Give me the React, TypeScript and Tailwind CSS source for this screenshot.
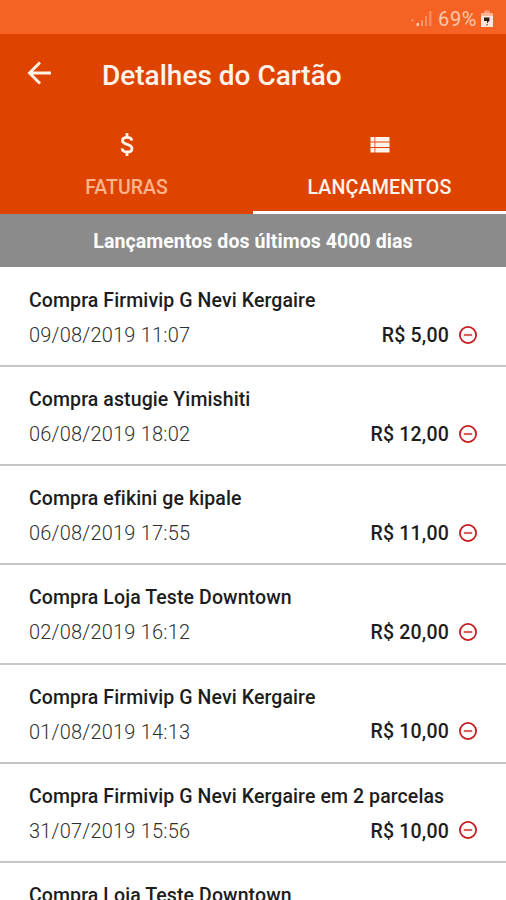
import React from 'react';

interface Lancamento {
  id: number;
  title: string;
  date: string;
  value: string;
}

const lancamentos: Lancamento[] = [
  { id: 1, title: 'Compra Firmivip G Nevi Kergaire', date: '09/08/2019 11:07', value: 'R$ 5,00' },
  { id: 2, title: 'Compra astugie Yimishiti', date: '06/08/2019 18:02', value: 'R$ 12,00' },
  { id: 3, title: 'Compra efikini ge kipale', date: '06/08/2019 17:55', value: 'R$ 11,00' },
  { id: 4, title: 'Compra Loja Teste Downtown', date: '02/08/2019 16:12', value: 'R$ 20,00' },
  { id: 5, title: 'Compra Firmivip G Nevi Kergaire', date: '01/08/2019 14:13', value: 'R$ 10,00' },
  { id: 6, title: 'Compra Firmivip G Nevi Kergaire em 2 parcelas', date: '31/07/2019 15:56', value: 'R$ 10,00' },
  { id: 7, title: 'Compra Loja Teste Downtown', date: '', value: '' },
];

function StatusBar() {
  return (
    <div className="flex h-[34px] shrink-0 items-center justify-end bg-[#f56224] pr-[12px] pt-[3px] text-[#ffc9ad]">
      <svg width="22" height="17" viewBox="0 0 22 17" className="mr-[5px]" fill="currentColor">
        <rect x="0.5" y="9.5" width="2" height="2" opacity="0.6" />
        <rect x="5.5" y="13" width="2.5" height="3" />
        <rect x="10" y="10" width="2" height="6" opacity="0.5" />
        <rect x="14" y="6" width="2" height="10" opacity="0.45" />
        <rect x="18" y="1" width="2.5" height="15" opacity="0.4" />
      </svg>
      <span className="text-[20px] leading-none tracking-[0.6px]">69%</span>
      <svg width="14" height="18" viewBox="0 0 14 18" className="ml-[3px]">
        <rect x="4" y="0.5" width="6" height="3" rx="1.5" fill="#ff9c78" />
        <rect x="1" y="3" width="12" height="5" fill="#ffb498" />
        <rect x="1" y="6" width="12" height="11" fill="#ffe6da" />
        <path d="M4 7.5h5.5v3L7 13.5v-2.5H4z" fill="#2f1d18" />
        <rect x="6" y="14" width="2" height="1.5" fill="#a08c84" />
      </svg>
    </div>
  );
}

function MinusCircle() {
  return (
    <svg width="20" height="20" viewBox="0 0 20 20" fill="none" className="mb-[1px]">
      <circle cx="10" cy="10" r="8.1" stroke="#c51d20" strokeWidth="1.8" />
      <path d="M5.8 10h8.4" stroke="#d9605f" strokeWidth="2.2" />
    </svg>
  );
}

function LancamentoRow({ item }: { item: Lancamento }) {
  return (
    <div className="h-[99.15px] shrink-0 border-b-2 border-[#c6c6c6] pl-[29px] pr-[28px] pt-[21px] text-[#1d1d1d]">
      <p className="whitespace-nowrap text-[19.5px] font-medium leading-[24px] tracking-[0.1px]">{item.title}</p>
      {item.value && (
        <div className="mt-[9px] flex h-[26px] items-center">
          <span className="flex-1 text-[20px] font-light tracking-[0.2px] text-[#303030]">{item.date}</span>
          <span className="mr-[9px] pt-[1px] text-[19.5px] font-medium tracking-[0.2px]">{item.value}</span>
          <MinusCircle />
        </div>
      )}
    </div>
  );
}

export default function App() {
  return (
    <div className="flex h-[900px] w-[506px] flex-col overflow-hidden bg-white font-['Roboto',sans-serif]">
      <StatusBar />

      <header className="flex h-[180px] shrink-0 flex-col bg-[#de4300] text-[#fff3ea]">
        <div className="flex h-[80px] items-center pl-[27px]">
          <button type="button" aria-label="Voltar" className="pb-[3px]">
            <svg width="25" height="24" viewBox="0 0 25 24" fill="none" stroke="currentColor" strokeWidth="2.9">
              <path d="M24 12H2.5M13 1.5L2.5 12L13 22.5" />
            </svg>
          </button>
          <h1 className="ml-[50px] pt-[3px] text-[28px] font-medium leading-none">Detalhes do Cartão</h1>
        </div>

        <nav className="grid h-[100px] grid-cols-2">
          <div className="flex flex-col items-center pt-[18px]">
            <svg width="14" height="26" viewBox="0 0 14 26" fill="none" stroke="currentColor" strokeWidth="2.8">
              <path d="M7 1v4.5M7 20v4M12 8.5C11.5 6.5 9.8 5.3 7.2 5.3C4.3 5.3 2.4 6.6 2.4 8.8C2.4 13.3 12 11.3 12 16.4C12 18.7 10 20 7.2 20C4.3 20 2.3 18.7 2 16.4" />
            </svg>
            <span className="mt-[18px] text-[19.5px] font-medium leading-[24px] text-[#ffb38c]">FATURAS</span>
          </div>
          <div className="flex flex-col items-center border-b-[3px] border-white pt-[22px]">
            <svg width="20" height="18" viewBox="0 0 20 18" fill="currentColor">
              <path d="M.5 1h4v4.5h-4zM5.3 1h14.2v4.5H5.3zM.5 6.5h4V11h-4zM5.3 6.5h14.2V11H5.3zM.5 12h4v4.5h-4zM5.3 12h14.2v4.5H5.3z" />
            </svg>
            <span className="mt-[22px] text-[19.7px] font-medium leading-[24px] tracking-[0.1px]">LANÇAMENTOS</span>
          </div>
        </nav>
      </header>

      <div className="flex h-[53px] shrink-0 items-center justify-center bg-[#8b8b8b] pt-[2px] text-[19.5px] font-bold tracking-[0.08px] text-white">
        Lançamentos dos últimos 4000 dias
      </div>

      <main className="flex flex-col pt-[1px]">
        {lancamentos.map((item) => (
          <LancamentoRow key={item.id} item={item} />
        ))}
      </main>
    </div>
  );
}
